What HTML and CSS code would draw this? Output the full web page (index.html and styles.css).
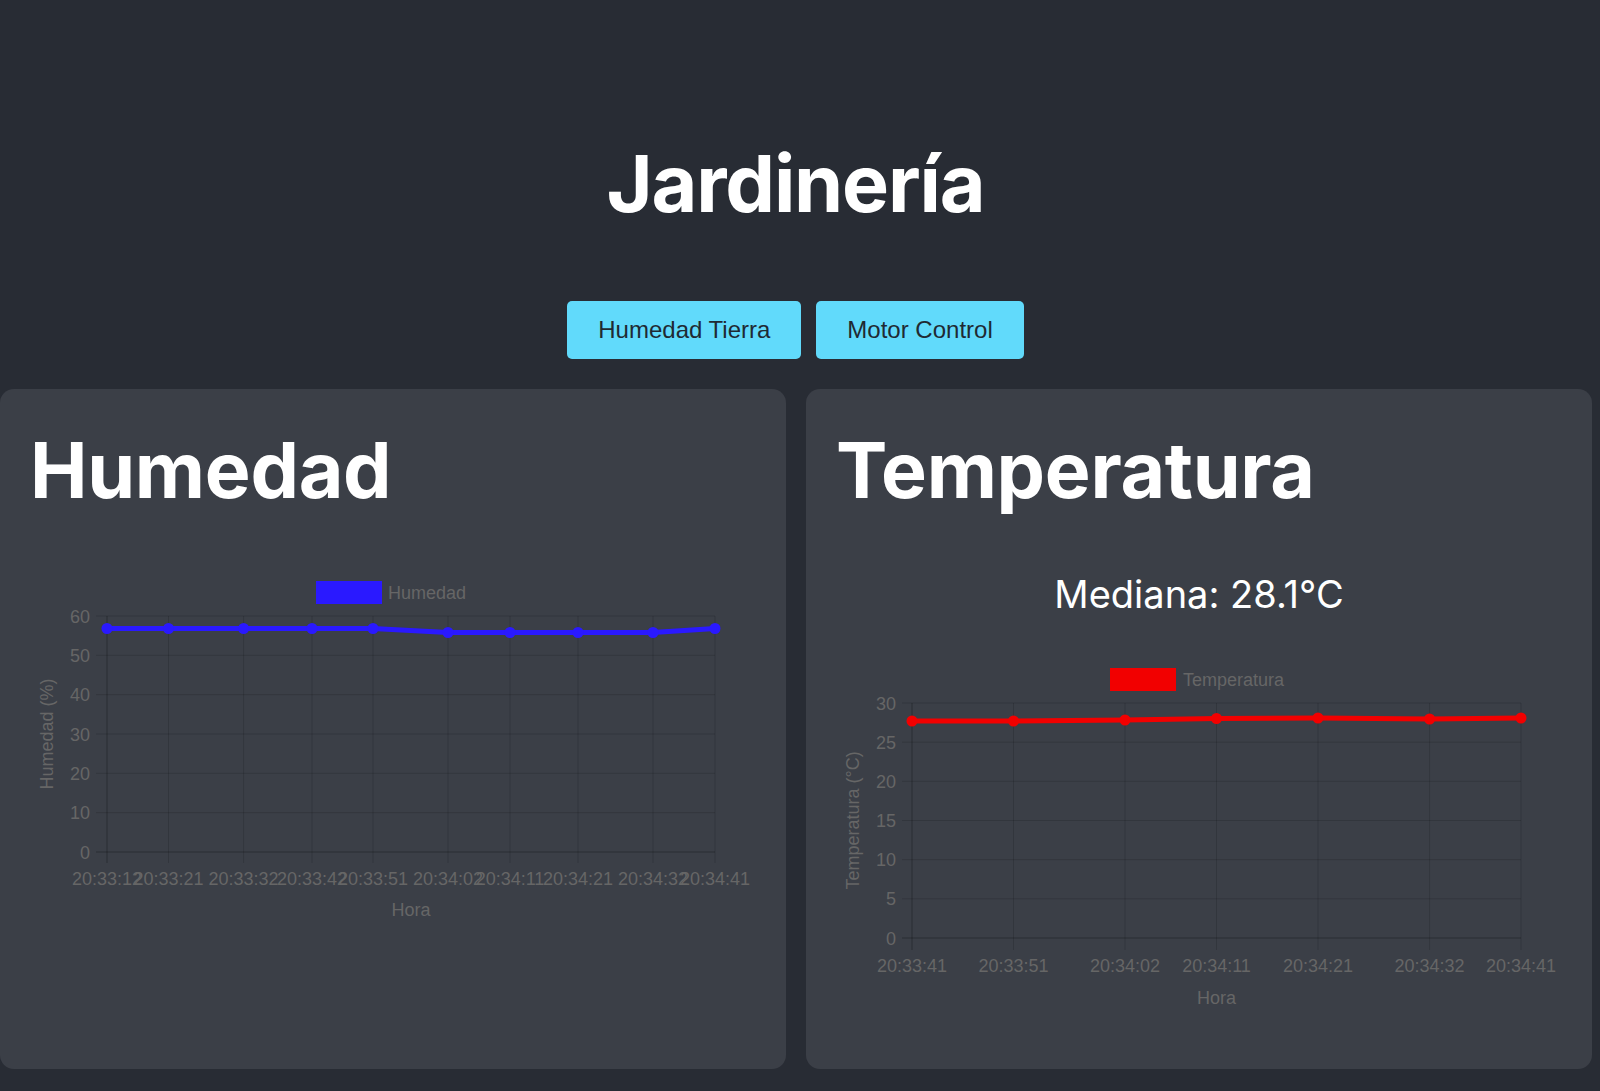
FILE: index.html
```html
<!DOCTYPE html>
<html lang="es">
<head>
<meta charset="utf-8">
<title>Jardinería</title>
<link rel="stylesheet" href="styles.css">
</head>
<body>
<div class="app">
  <header class="header">
    <h1 class="title">Jardinería</h1>
    <nav class="nav">
      <button class="nav-btn">Humedad Tierra</button>
      <button class="nav-btn">Motor Control</button>
    </nav>
  </header>
  <main class="cards">
    <section class="card">
      <h2 class="card-title">Humedad</h2>
      <svg class="chart" width="726" height="360" viewBox="0 0 726 360">
        <g class="grid">
          <line x1="66" y1="45" x2="685" y2="45"/>
          <line x1="66" y1="84.3" x2="685" y2="84.3"/>
          <line x1="66" y1="123.7" x2="685" y2="123.7"/>
          <line x1="66" y1="163" x2="685" y2="163"/>
          <line x1="66" y1="202.3" x2="685" y2="202.3"/>
          <line x1="66" y1="241.7" x2="685" y2="241.7"/>
          <line x1="138.5" y1="45" x2="138.5" y2="292"/>
          <line x1="213.6" y1="45" x2="213.6" y2="292"/>
          <line x1="282" y1="45" x2="282" y2="292"/>
          <line x1="343" y1="45" x2="343" y2="292"/>
          <line x1="418" y1="45" x2="418" y2="292"/>
          <line x1="480" y1="45" x2="480" y2="292"/>
          <line x1="548" y1="45" x2="548" y2="292"/>
          <line x1="623" y1="45" x2="623" y2="292"/>
          <line x1="685" y1="45" x2="685" y2="292"/>
        </g>
        <g class="axis">
          <line x1="66" y1="281" x2="685" y2="281"/>
          <line x1="77" y1="45" x2="77" y2="292"/>
        </g>
        <rect class="legend-blue" x="286" y="10" width="66" height="23"/>
        <text class="lbl" x="358" y="28">Humedad</text>
        <g class="lbl ylbl">
          <text x="60" y="51.5">60</text>
          <text x="60" y="90.8">50</text>
          <text x="60" y="130.2">40</text>
          <text x="60" y="169.5">30</text>
          <text x="60" y="208.8">20</text>
          <text x="60" y="248.2">10</text>
          <text x="60" y="287.5">0</text>
        </g>
        <g class="lbl xlbl">
          <text x="77" y="314">20:33:12</text>
          <text x="138.5" y="314">20:33:21</text>
          <text x="213.6" y="314">20:33:32</text>
          <text x="282" y="314">20:33:42</text>
          <text x="343" y="314">20:33:51</text>
          <text x="418" y="314">20:34:02</text>
          <text x="480" y="314">20:34:11</text>
          <text x="548" y="314">20:34:21</text>
          <text x="623" y="314">20:34:32</text>
          <text x="685" y="314">20:34:41</text>
          <text x="381" y="345">Hora</text>
        </g>
        <text class="lbl ytitle" transform="translate(17 163) rotate(-90)" x="0" y="6">Humedad (%)</text>
        <polyline class="line-blue" points="77,57.5 138.5,57.5 213.6,57.5 282,57.5 343,57.5 418,61.5 480,61.5 548,61.5 623,61.5 685,57.5"/>
        <g class="dots-blue">
          <circle cx="77" cy="57.5" r="5.5"/>
          <circle cx="138.5" cy="57.5" r="5.5"/>
          <circle cx="213.6" cy="57.5" r="5.5"/>
          <circle cx="282" cy="57.5" r="5.5"/>
          <circle cx="343" cy="57.5" r="5.5"/>
          <circle cx="418" cy="61.5" r="5.5"/>
          <circle cx="480" cy="61.5" r="5.5"/>
          <circle cx="548" cy="61.5" r="5.5"/>
          <circle cx="623" cy="61.5" r="5.5"/>
          <circle cx="685" cy="57.5" r="5.5"/>
        </g>
      </svg>
    </section>
    <section class="card">
      <h2 class="card-title">Temperatura</h2>
      <p class="median">Mediana: 28.1°C</p>
      <svg class="chart" width="726" height="360" viewBox="0 0 726 360">
        <g class="grid">
          <line x1="66" y1="45" x2="685" y2="45"/>
          <line x1="66" y1="84.2" x2="685" y2="84.2"/>
          <line x1="66" y1="123.3" x2="685" y2="123.3"/>
          <line x1="66" y1="162.5" x2="685" y2="162.5"/>
          <line x1="66" y1="201.7" x2="685" y2="201.7"/>
          <line x1="66" y1="240.8" x2="685" y2="240.8"/>
          <line x1="177.5" y1="45" x2="177.5" y2="292"/>
          <line x1="289" y1="45" x2="289" y2="292"/>
          <line x1="380.5" y1="45" x2="380.5" y2="292"/>
          <line x1="482" y1="45" x2="482" y2="292"/>
          <line x1="593.6" y1="45" x2="593.6" y2="292"/>
          <line x1="685" y1="45" x2="685" y2="292"/>
        </g>
        <g class="axis">
          <line x1="66" y1="280" x2="685" y2="280"/>
          <line x1="76" y1="45" x2="76" y2="292"/>
        </g>
        <rect class="legend-red" x="274" y="10" width="66" height="23"/>
        <text class="lbl" x="347" y="28">Temperatura</text>
        <g class="lbl ylbl">
          <text x="60" y="51.5">30</text>
          <text x="60" y="90.7">25</text>
          <text x="60" y="129.8">20</text>
          <text x="60" y="169">15</text>
          <text x="60" y="208.2">10</text>
          <text x="60" y="247.3">5</text>
          <text x="60" y="286.5">0</text>
        </g>
        <g class="lbl xlbl">
          <text x="76" y="314">20:33:41</text>
          <text x="177.5" y="314">20:33:51</text>
          <text x="289" y="314">20:34:02</text>
          <text x="380.5" y="314">20:34:11</text>
          <text x="482" y="314">20:34:21</text>
          <text x="593.6" y="314">20:34:32</text>
          <text x="685" y="314">20:34:41</text>
          <text x="380.5" y="346">Hora</text>
        </g>
        <text class="lbl ytitle" transform="translate(17 162.5) rotate(-90)" x="0" y="6">Temperatura (°C)</text>
        <polyline class="line-red" points="76,63 177.5,63 289,62 380.5,60.5 482,60 593.6,61 685,60"/>
        <g class="dots-red">
          <circle cx="76" cy="63" r="5.5"/>
          <circle cx="177.5" cy="63" r="5.5"/>
          <circle cx="289" cy="62" r="5.5"/>
          <circle cx="380.5" cy="60.5" r="5.5"/>
          <circle cx="482" cy="60" r="5.5"/>
          <circle cx="593.6" cy="61" r="5.5"/>
          <circle cx="685" cy="60" r="5.5"/>
        </g>
      </svg>
    </section>
  </main>
</div>
</body>
</html>
```

FILE: styles.css
```css
html, body {
  margin: 0;
  padding: 0;
  background: #282c34;
}

.app {
  width: calc(100% - 9px);
  display: flex;
  flex-direction: column;
}

.header {
  display: flex;
  flex-direction: column;
  align-items: center;
  padding-top: 135px;
}

.title {
  margin: 0;
  font-family: Inter, "Liberation Sans", sans-serif;
  font-weight: 700;
  font-size: 79px;
  line-height: 97px;
  letter-spacing: -1.2px;
  color: #ffffff;
}

.nav {
  display: flex;
  gap: 15px;
  margin-top: 69px;
}

.nav-btn {
  font-family: "Liberation Sans", Arial, sans-serif;
  font-size: 24px;
  line-height: 28px;
  color: #1f2a33;
  background: #61dafb;
  border: none;
  border-radius: 5px;
  padding: 15px 31px;
  cursor: pointer;
}

.cards {
  display: flex;
  gap: 20px;
  margin-top: 30px;
}

.card {
  flex: 1 1 0;
  background: #3b3f47;
  border-radius: 14px;
  padding: 33px 30px 0;
  height: 680px;
  box-sizing: border-box;
}

.card-title {
  margin: 0 0 53px;
  font-family: Inter, "Liberation Sans", sans-serif;
  font-weight: 700;
  font-size: 77px;
  line-height: 96px;
  letter-spacing: -0.3px;
  color: #ffffff;
}

.median {
  margin: 0 0 41px;
  text-align: center;
  font-family: Inter, "Liberation Sans", sans-serif;
  font-weight: 400;
  font-size: 38px;
  line-height: 46px;
  color: #ffffff;
}

.chart {
  display: block;
}

.grid line {
  stroke: rgba(0, 0, 0, 0.14);
  stroke-width: 1;
}

.axis line {
  stroke: rgba(0, 0, 0, 0.28);
  stroke-width: 1;
}

.lbl {
  font-family: "Liberation Sans", Arial, sans-serif;
  font-size: 18px;
  fill: #666666;
}

.ylbl {
  text-anchor: end;
}

.xlbl {
  text-anchor: middle;
}

.ytitle {
  text-anchor: middle;
}

.legend-blue {
  fill: #2a19ff;
}

.legend-red {
  fill: #f20000;
}

.line-blue {
  fill: none;
  stroke: #2a19ff;
  stroke-width: 5;
  stroke-linejoin: round;
}

.dots-blue circle {
  fill: #2a19ff;
}

.line-red {
  fill: none;
  stroke: #f20000;
  stroke-width: 5;
  stroke-linejoin: round;
}

.dots-red circle {
  fill: #f20000;
}
```
